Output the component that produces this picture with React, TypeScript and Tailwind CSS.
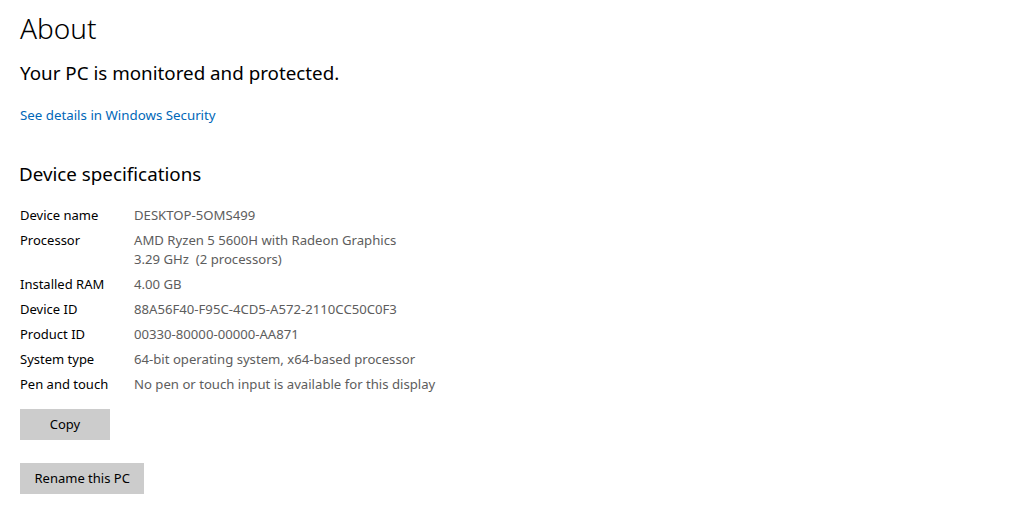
import React from "react";

const rows: [string, string[]][] = [
  ["Device name", ["DESKTOP-5OMS499"]],
  ["Processor", ["AMD Ryzen 5 5600H with Radeon Graphics", "3.29 GHz\u00a0 (2 processors)"]],
  ["Installed RAM", ["4.00 GB"]],
  ["Device ID", ["88A56F40-F95C-4CD5-A572-2110CC50C0F3"]],
  ["Product ID", ["00330-80000-00000-AA871"]],
  ["System type", ["64-bit operating system, x64-based processor"]],
  ["Pen and touch", ["No pen or touch input is available for this display"]],
];

export default function App() {
  return (
    <div
      className="w-[1013px] h-[523px] bg-white overflow-hidden text-black"
      style={{ fontFamily: '"Noto Sans", "Open Sans", sans-serif' }}
    >
      <div className="pl-[20px] pt-[10px]">
        <h1 className="text-[28px] leading-[36px] font-light">About</h1>
        <div className="mt-[14px] text-[18.8px] leading-[26px]">Your PC is monitored and protected.</div>
        <div className="mt-[19px] text-[13.3px] leading-[20px] text-[#0067b8]">See details in Windows Security</div>
        <div className="mt-[36px] -ml-[1px] text-[18.8px] leading-[26px]">Device specifications</div>
        <div className="mt-[19px] flex flex-col gap-[6px] text-[13px] leading-[19px]">
          {rows.map(([k, v]) => (
            <div key={k} className="flex">
              <div className="w-[114px] shrink-0">{k}</div>
              <div className="text-[#5d5d5d] text-[13.15px]">
                {v.map((l) => (
                  <div key={l}>{l}</div>
                ))}
              </div>
            </div>
          ))}
        </div>
        <div className="mt-[15px] flex flex-col items-start gap-[23px]">
          <button className="w-[90px] h-[31px] bg-[#cccccc] text-[13px]">Copy</button>
          <button className="h-[31px] px-[14.5px] bg-[#cccccc] text-[13px]">Rename this PC</button>
        </div>
      </div>
    </div>
  );
}
